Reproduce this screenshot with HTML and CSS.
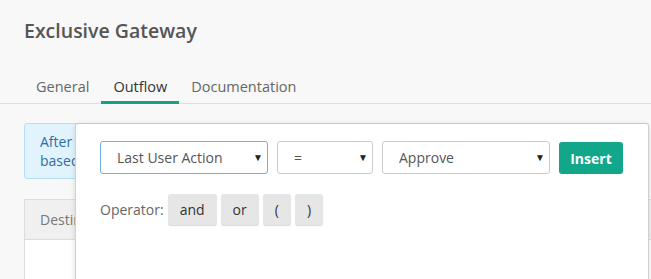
FILE: index.html
```html
<!DOCTYPE html>
<html lang="en">
<head>
    <meta charset="UTF-8">
    <meta name="viewport" content="width=device-width, initial-scale=1.0">
    <title>Exclusive Gateway</title>
    <link rel="stylesheet" href="styles.css">
</head>
<body>

<div class="panel">
    <h1 class="title">Exclusive Gateway</h1>

    <ul class="tabs">
        <li class="tab">General</li>
        <li class="tab active">Outflow</li>
        <li class="tab">Documentation</li>
    </ul>

    <div class="content">
        <div class="alert">
            After this gateway the process continues on exactly one outgoing flow,<br>
            based on the first condition that evaluates to true.
        </div>

        <table class="flows">
            <thead>
                <tr>
                    <th>Destination</th>
                </tr>
            </thead>
            <tbody>
                <tr>
                    <td></td>
                </tr>
            </tbody>
        </table>
    </div>

    <!-- condition builder popover -->
    <div class="builder">
        <div class="builder-row">
            <div class="select-wrap focused wide">
                <select>
                    <option>Last User Action</option>
                </select>
            </div>
            <div class="select-wrap narrow">
                <select>
                    <option>=</option>
                </select>
            </div>
            <div class="select-wrap wide">
                <select>
                    <option>Approve</option>
                </select>
            </div>
            <button class="btn-insert">Insert</button>
        </div>

        <div class="operator-row">
            <span class="operator-label">Operator:</span>
            <button class="btn-op">and</button>
            <button class="btn-op">or</button>
            <button class="btn-op">(</button>
            <button class="btn-op">)</button>
        </div>
    </div>
</div>

</body>
</html>
```

FILE: styles.css
```css
html, body {
    margin: 0;
    height: 100%;
    overflow: hidden;
}
body {
    font-family: "Open Sans", Arial, sans-serif;
    font-size: 14px;
    background-color: #f8f8f8;
    color: #555;
}
.panel {
    position: relative;
    min-height: 100%;
}
.title {
    margin: 0;
    padding: 17px 24px 0;
    font-size: 19.5px;
    line-height: 28px;
    font-weight: 600;
    color: #555;
}
.tabs {
    display: flex;
    list-style: none;
    margin: 32px 0 0;
    padding: 0 0 0 24px;
    border-bottom: 1px solid #dedede;
}
.tab {
    padding: 0 12px 4px;
    font-size: 14.5px;
    line-height: 20px;
    color: #666;
    border-bottom: 3px solid transparent;
    margin-bottom: -1px;
}
.tab.active {
    color: #333;
    border-bottom-color: #16a085;
}
.content {
    padding: 19px 24px 0;
}
.alert {
    padding: 8px 15px;
    line-height: 19px;
    background-color: #e1f3fc;
    border: 1px solid #b5def3;
    border-radius: 3px;
    color: #2f6ea5;
    white-space: nowrap;
    overflow: hidden;
}
.flows {
    margin-top: 20px;
    width: 700px;
    border-collapse: collapse;
    background: #fff;
    border: 1px solid #dcdcdc;
}
.flows th {
    height: 39px;
    padding: 0 15px;
    text-align: left;
    font-weight: 400;
    color: #777;
    background-color: #f0f0f0;
    border-bottom: 1px solid #dcdcdc;
}
.flows td {
    height: 60px;
}
.builder {
    position: absolute;
    left: 75px;
    top: 123px;
    width: 524px;
    height: 200px;
    padding: 17px 24px;
    background: #fff;
    border: 1px solid #cfcfcf;
    border-top-color: #a9d0e6;
    border-radius: 3px;
    box-shadow: 0 2px 6px rgba(0,0,0,0.12);
}
.builder-row {
    display: flex;
    gap: 9px;
}
.select-wrap {
    position: relative;
    height: 33px;
}
.select-wrap.wide {
    width: 168px;
}
.select-wrap.narrow {
    width: 96px;
}
.select-wrap::after {
    content: "\25BC";
    position: absolute;
    right: 5px;
    top: 9px;
    font-size: 10px;
    color: #222;
    pointer-events: none;
}
.select-wrap select {
    appearance: none;
    -webkit-appearance: none;
    width: 100%;
    height: 100%;
    padding: 0 20px 0 16px;
    font-family: inherit;
    font-size: 14px;
    color: #555;
    background: #fff;
    border: 1px solid #cccccc;
    border-radius: 3px;
}
.select-wrap.focused select {
    border-color: #72aee0;
}
.btn-insert {
    height: 32px;
    margin-top: 1px;
    width: 64px;
    font-family: inherit;
    font-size: 14px;
    font-weight: 700;
    color: #fff;
    background-color: #12a68a;
    border: none;
    border-radius: 3px;
    cursor: pointer;
}
.operator-row {
    display: flex;
    align-items: center;
    gap: 4px;
    margin-top: 20px;
}
.operator-label {
    color: #666;
}
.btn-op {
    height: 31px;
    padding: 0 12px;
    font-family: inherit;
    font-size: 14px;
    color: #333;
    background-color: #e6e6e6;
    border: none;
    border-radius: 3px;
    box-shadow: 0 1px 1px rgba(0,0,0,0.15);
    cursor: pointer;
}
```
